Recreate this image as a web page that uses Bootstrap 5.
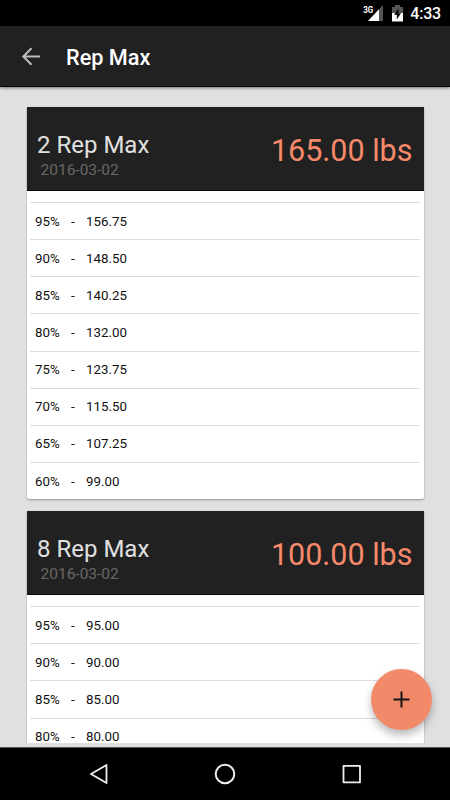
<!DOCTYPE html>
<html lang="en">
<head>
<meta charset="utf-8">
<meta name="viewport" content="width=device-width, initial-scale=1">
<title>Rep Max</title>
<link href="https://cdn.jsdelivr.net/npm/bootstrap@5.3.0/dist/css/bootstrap.min.css" rel="stylesheet">
<style>
body { font-family: Roboto, sans-serif; background: #e0e0e0; }
svg { display: block; }
.screen { width: 450px; height: 800px; }
.status-bar { height: 26px; background: #000; padding-right: 9px; }
.battery { margin-left: 8px; }
.clock { font-size: 16px; font-weight: 500; line-height: 26px; letter-spacing: -.2px; margin-left: 7px; padding-top: 2px; }
.app-bar { height: 61px; background: #212121; border-bottom: 1px solid #080808; box-shadow: 0 1px 3px rgba(0,0,0,.5); padding-left: 21px; z-index: 1; }
.app-title { font-size: 21.7px; font-weight: 500; line-height: 30px; margin-left: 24px; padding-top: 3px; }
.content-area { height: 656px; padding: 20px 26px 0 26.500px; gap: 12px; }
.max-card { background: #fff; border-radius: 0 0 2px 2px; box-shadow: 0 1px 2px rgba(0,0,0,.35); }
.max-head { height: 84px; background: #212121; border-bottom: 1px solid #0a0a0a; padding: 0 11.500px 0 10.500px; }
.max-name { font-size: 24px; line-height: 30px; color: #e0e0e0; padding-top: 23px; }
.max-date { font-size: 15.5px; line-height: 20px; color: #686868; padding-left: 3.500px; }
.max-value { font-size: 30.5px; line-height: 40px; color: #f58969; padding-top: 4px; }
.pct-list { padding: 11px 4px 0 3.500px; }
.pct-row { height: 37.15px; border-top: 1px solid #dcdcdc; padding-left: 5px; padding-top: 1px; font-size: 13.3px; line-height: 20px; color: #111; }
.pct { width: 36px; }
.dash { width: 15px; }
.nav-keys { height: 53px; background: #000; border-top: 1px solid #555; padding: 0 85px; }
.fab { left: 371px; top: 669px; width: 61px; height: 61px; background: #f28a6a; box-shadow: 0 5px 9px rgba(0,0,0,.28); z-index: 3; }
</style>
</head>
<body>
<div class="screen position-relative overflow-hidden d-flex flex-column">
  <div class="status-bar d-flex align-items-center justify-content-end text-white flex-shrink-0">
    <svg width="21" height="20" viewBox="0 0 21 20">
      <path d="M20 2V18H5z" fill="#555"/>
      <path d="M16 6.300V18H5z" fill="#fff"/>
      <path d="M0 0h11v10.500H0z" fill="#000"/>
      <text x=".3" y="9.500" font-size="9" font-weight="700" fill="#fff" textLength="10" lengthAdjust="spacingAndGlyphs">3G</text>
    </svg>
    <svg class="battery" width="11" height="17" viewBox="0 0 11 17">
      <path d="M3 0h5v2h3v6H0V2h3z" fill="#555"/>
      <path d="M0 8h11v8.500H0z" fill="#fff"/>
      <path d="M6.500 3.500 2 9.800h2.800v4.700L9 8.200H6.500z" fill="#000"/>
    </svg>
    <span class="clock">4:33</span>
  </div>
  <header class="app-bar d-flex align-items-center text-white position-relative flex-shrink-0">
    <svg width="21" height="20" viewBox="0 0 21 20" fill="none" stroke="#bdbdbd" stroke-width="2"><path d="M19 10.500H3M10.500 2.300 2.300 10.500l8.200 8.200"/></svg>
    <h1 class="app-title mb-0">Rep Max</h1>
  </header>
  <main class="content-area d-flex flex-column overflow-hidden flex-shrink-0">
    <section class="max-card flex-shrink-0">
      <div class="max-head d-flex justify-content-between align-items-center">
        <div class="align-self-start"><div class="max-name">2 Rep Max</div><div class="max-date">2016-03-02</div></div>
        <div class="max-value">165.00 lbs</div>
      </div>
      <div class="pct-list">
        <div class="pct-row d-flex align-items-center"><span class="pct">95%</span><span class="dash">-</span><span>156.75</span></div>
        <div class="pct-row d-flex align-items-center"><span class="pct">90%</span><span class="dash">-</span><span>148.50</span></div>
        <div class="pct-row d-flex align-items-center"><span class="pct">85%</span><span class="dash">-</span><span>140.25</span></div>
        <div class="pct-row d-flex align-items-center"><span class="pct">80%</span><span class="dash">-</span><span>132.00</span></div>
        <div class="pct-row d-flex align-items-center"><span class="pct">75%</span><span class="dash">-</span><span>123.75</span></div>
        <div class="pct-row d-flex align-items-center"><span class="pct">70%</span><span class="dash">-</span><span>115.50</span></div>
        <div class="pct-row d-flex align-items-center"><span class="pct">65%</span><span class="dash">-</span><span>107.25</span></div>
        <div class="pct-row d-flex align-items-center"><span class="pct">60%</span><span class="dash">-</span><span>99.00</span></div>
      </div>
    </section>
    <section class="max-card flex-shrink-0">
      <div class="max-head d-flex justify-content-between align-items-center">
        <div class="align-self-start"><div class="max-name">8 Rep Max</div><div class="max-date">2016-03-02</div></div>
        <div class="max-value">100.00 lbs</div>
      </div>
      <div class="pct-list">
        <div class="pct-row d-flex align-items-center"><span class="pct">95%</span><span class="dash">-</span><span>95.00</span></div>
        <div class="pct-row d-flex align-items-center"><span class="pct">90%</span><span class="dash">-</span><span>90.00</span></div>
        <div class="pct-row d-flex align-items-center"><span class="pct">85%</span><span class="dash">-</span><span>85.00</span></div>
        <div class="pct-row d-flex align-items-center"><span class="pct">80%</span><span class="dash">-</span><span>80.00</span></div>
      </div>
    </section>
  </main>
  <nav class="nav-keys d-flex align-items-center justify-content-between mt-auto flex-shrink-0" aria-label="System">
    <svg width="26" height="24" viewBox="0 0 26 24" fill="none" stroke="#eee" stroke-width="1.800" stroke-linejoin="round"><path d="M21.500 3v18L6 12z"/></svg>
    <svg width="24" height="24" viewBox="0 0 24 24" fill="none" stroke="#eee" stroke-width="2"><circle cx="12" cy="12" r="9.300"/></svg>
    <svg width="26" height="24" viewBox="0 0 26 24" fill="none" stroke="#eee" stroke-width="1.800" stroke-linejoin="round"><path d="M4.500 3.800h16.500v16.500H4.500z"/></svg>
  </nav>
  <button type="button" class="fab position-absolute border-0 rounded-circle p-0 d-flex align-items-center justify-content-center" aria-label="Add">
    <svg width="17" height="17" viewBox="0 0 17 17" stroke="#151515" stroke-width="2"><path d="M8.500 .5v16M.5 8.500h16"/></svg>
  </button>
</div>
<script src="https://cdn.jsdelivr.net/npm/bootstrap@5.3.0/dist/js/bootstrap.bundle.min.js"></script>
</body>
</html>
